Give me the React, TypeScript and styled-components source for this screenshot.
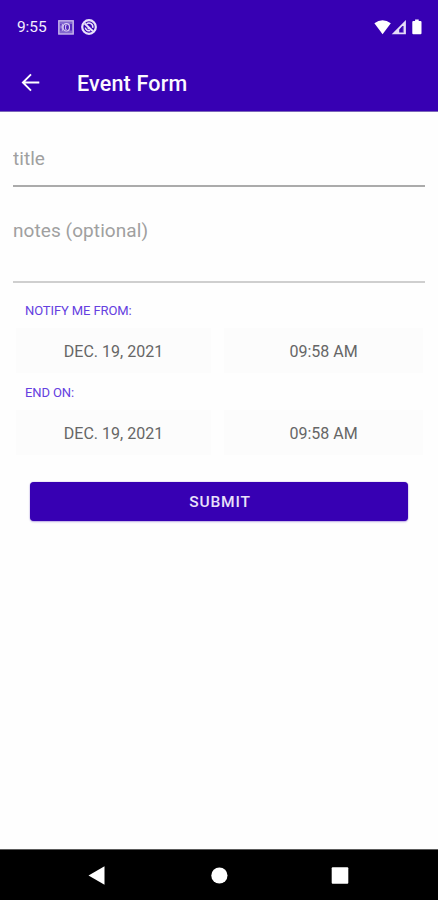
import React from "react";
import styled, { createGlobalStyle } from "styled-components";

const GlobalStyle = createGlobalStyle`
  * { box-sizing: border-box; }
  body { margin: 0; background: #fff; font-family: Roboto, "Liberation Sans", sans-serif; }
  button, input, textarea { font: inherit; border: 0; padding: 0; margin: 0; background: none; outline: none; border-radius: 0; }
  svg { display: block; flex: none; }
`;

const Screen = styled.div`
  width: 438px;
  height: 900px;
  display: flex;
  flex-direction: column;
  overflow: hidden;
  background: #fefefe;
`;

const StatusBar = styled.div`
  height: 54px;
  display: flex;
  align-items: center;
  padding: 0 15px 0 17px;
  background: #3700b3;
  color: #fff;
`;

const Clock = styled.span`
  width: 41px;
  font-size: 15.5px;
  line-height: 18px;
  letter-spacing: -0.1px;
  color: #f3eefc;
`;

const AppBar = styled.header`
  height: 58px;
  display: flex;
  align-items: center;
  padding-left: 21px;
  background: #3700b3;
  border-bottom: 1px solid #7a66b8;
`;

const BackButton = styled.button`
  width: 56px;
  height: 19px;
`;

const Title = styled.h1`
  margin: 0;
  padding-top: 2px;
  font-size: 21.5px;
  line-height: 28px;
  font-weight: 500;
  letter-spacing: 0.18px;
  color: #fbf9ff;
`;

const Form = styled.form`
  flex: 1;
  display: flex;
  flex-direction: column;
  padding: 0 13px;
`;

const TitleInput = styled.input`
  height: 75px;
  padding-top: 19px;
  border-bottom: 2px solid #ababab;
  font-size: 19px;
  letter-spacing: 0.05px;
  &::placeholder { color: #a0a0a0; opacity: 1; }
`;

const NotesInput = styled.textarea`
  height: 96px;
  padding-top: 32px;
  border-bottom: 2px solid #cfcfcf;
  font-size: 19px;
  line-height: 24px;
  resize: none;
  overflow: hidden;
  letter-spacing: 0.08px;
  &::placeholder { color: #a0a0a0; opacity: 1; }
`;

const Group = styled.section<{ $first?: boolean }>`
  margin-top: ${(p) => (p.$first ? 20 : 12)}px;
`;

const Label = styled.div`
  height: 16px;
  padding-left: 12px;
  font-size: 13px;
  line-height: 16px;
  letter-spacing: -0.1px;
  color: #6540e0;
`;

const PickerRow = styled.div`
  display: grid;
  grid-template-columns: 195px 199px;
  column-gap: 13px;
  padding: 9px 0 0 3px;
`;

const Picker = styled.button`
  height: 45px;
  padding-top: 2px;
  background: #fcfcfc;
  color: #666;
  font-size: 16px;
`;

const Submit = styled.button`
  height: 39px;
  margin: 27px 17px 0;
  padding: 1px 0 0 2px;
  border-radius: 4px;
  background: #3700b3;
  box-shadow: 0 0 1px rgba(55, 0, 179, 0.6), 0 1px 2px rgba(55, 0, 179, 0.3);
  color: #e9e0fa;
  font-size: 15.5px;
  font-weight: 500;
  letter-spacing: 0.8px;
`;

const NavBar = styled.nav`
  height: 51px;
  display: flex;
  align-items: center;
  padding-left: 88px;
  background: #000;
  border-top: 1px solid #5c5c5c;
`;

const NavButton = styled.button<{ $gap?: number }>`
  margin-right: ${(p) => p.$gap ?? 0}px;
`;

function CashIcon() {
  return (
    <svg width="16" height="15" viewBox="0 0 16 15" fill="none" stroke="#c6b6eb">
      <rect x=".8" y=".8" width="14.4" height="13.2" fill="#8266cf" strokeWidth="1.4" />
      <path d="M3.2 4v1.6M3.2 8.6v2M13 4v6.5" stroke="#3700b3" strokeWidth="1.2" />
      <ellipse cx="8.3" cy="7.3" rx="3.2" ry="3.7" fill="#5226bd" stroke="#dccff5" strokeWidth="1.1" />
      <path d="M8.7 5.2H7.6v4.2h1.1M4.2 4v6.8" stroke="#dccff5" strokeWidth="1" />
    </svg>
  );
}

function BlockedIcon() {
  return (
    <svg width="16" height="16" viewBox="0 0 16 16" fill="none" stroke="#e9e2fa">
      <circle cx="8" cy="8" r="6.8" strokeWidth="2.2" />
      <path d="M4.3 8.6a3.8 3.8 0 0 0 5 3M5.6 5a3.8 3.8 0 0 1 6.1 3.8" strokeWidth="1.5" />
      <path d="M3.6 4.6l8.4 7.6" strokeWidth="2" />
      <path d="M6.6 8.6l1.8 1.6" strokeWidth="1.4" />
    </svg>
  );
}

function SystemIcons() {
  return (
    <svg width="49" height="17" viewBox="0 0 49 17" fill="#fff">
      <path d="M.4 4.2Q8.5-1.7 16.8 4.2L8.6 15.2Z" />
      <path fillRule="evenodd" d="M17.7 15.2L31.9 1v14.2ZM29.6 7h-1.2l-3.2 3.6v3h4.4Z" fill="#e5dcf8" />
      <path d="M29.3 7.2v6.4" stroke="#9b82da" strokeWidth=".8" />
      <path d="M38.3 3q0-1 1-1h1.8V.5h3.6V2h1.8q1 0 1 1v11.2q0 1-1 1h-7.2q-1 0-1-1Z" />
    </svg>
  );
}

const NotificationIcons = styled.div`
  flex: 1;
  display: flex;
  align-items: center;
  gap: 7px;
`;

interface DateTimeProps {
  label: string;
  date: string;
  time: string;
  first?: boolean;
}

function DateTimeGroup({ label, date, time, first }: DateTimeProps) {
  return (
    <Group $first={first}>
      <Label>{label}</Label>
      <PickerRow>
        <Picker type="button">{date}</Picker>
        <Picker type="button">{time}</Picker>
      </PickerRow>
    </Group>
  );
}

export default function App() {
  return (
    <>
      <GlobalStyle />
      <Screen>
        <StatusBar>
          <Clock>9:55</Clock>
          <NotificationIcons>
            <CashIcon />
            <BlockedIcon />
          </NotificationIcons>
          <SystemIcons />
        </StatusBar>
        <AppBar>
          <BackButton aria-label="Back">
            <svg width="19" height="19" viewBox="0 0 19 19" fill="none" stroke="#fff" strokeWidth="1.9">
              <path d="M18.3 9.5H2M10 1.4L1.9 9.5l8.1 8.1" />
            </svg>
          </BackButton>
          <Title>Event Form</Title>
        </AppBar>
        <Form>
          <TitleInput placeholder="title" />
          <NotesInput placeholder="notes (optional)" />
          <DateTimeGroup first label="NOTIFY ME FROM:" date="DEC. 19, 2021" time="09:58 AM" />
          <DateTimeGroup label="END ON:" date="DEC. 19, 2021" time="09:58 AM" />
          <Submit type="button">SUBMIT</Submit>
        </Form>
        <NavBar>
          <NavButton $gap={106} aria-label="Back">
            <svg width="17" height="19" viewBox="0 0 17 19" fill="#fff">
              <path d="M.5 9.5L16.5.2v18.6Z" />
            </svg>
          </NavButton>
          <NavButton $gap={103} aria-label="Home">
            <svg width="17" height="17" viewBox="0 0 17 17" fill="#fff">
              <circle cx="8.4" cy="8.5" r="8.1" />
            </svg>
          </NavButton>
          <NavButton aria-label="Recents">
            <svg width="18" height="17" viewBox="0 0 18 17" fill="#fff">
              <rect x=".7" y=".3" width="16.6" height="16.4" rx="1" />
            </svg>
          </NavButton>
        </NavBar>
      </Screen>
    </>
  );
}
